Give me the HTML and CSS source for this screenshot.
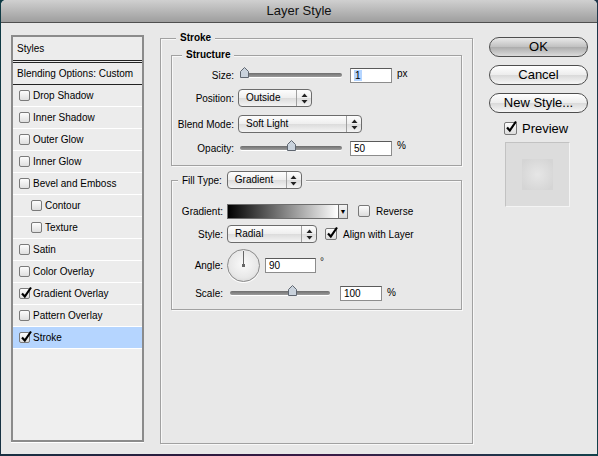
FILE: index.html
```html
<!DOCTYPE html>
<html lang="en">
<head>
  <meta charset="UTF-8" />
  <title>Layer Style</title>
  <link rel="stylesheet" href="styles.css">
</head>
<body>

  <div class="window">
    <div class="titlebar">Layer Style</div>

    <div class="content">

      <!-- effects list -->
      <div class="style-list">
        <div class="list-head">Styles</div>
        <div class="list-blend">Blending Options: Custom</div>
        <ul class="effects">
          <li><span class="check"></span>Drop Shadow</li>
          <li><span class="check"></span>Inner Shadow</li>
          <li><span class="check"></span>Outer Glow</li>
          <li><span class="check"></span>Inner Glow</li>
          <li><span class="check"></span>Bevel and Emboss</li>
          <li class="sub"><span class="check"></span>Contour</li>
          <li class="sub"><span class="check"></span>Texture</li>
          <li><span class="check"></span>Satin</li>
          <li><span class="check"></span>Color Overlay</li>
          <li><span class="check on"><svg viewBox="0 0 12 12"><path d="M2 6.5 L4.8 9.5 L11 0.5"/></svg></span>Gradient Overlay</li>
          <li><span class="check"></span>Pattern Overlay</li>
          <li class="selected"><span class="check on"><svg viewBox="0 0 12 12"><path d="M2 6.5 L4.8 9.5 L11 0.5"/></svg></span>Stroke</li>
        </ul>
      </div>

      <!-- stroke settings -->
      <fieldset class="group stroke-group">
        <legend class="title">Stroke</legend>

        <fieldset class="group structure">
          <legend class="title">Structure</legend>

          <div class="row r-size">
            <span class="label">Size:</span>
            <div class="slider"><span class="thumb" style="--pos: 0"><svg viewBox="0 0 9 11"><polygon points="0.5,4.5 4.5,0.5 8.5,4.5 8.5,10.5 0.5,10.5"/></svg></span></div>
            <span class="field"><span class="selected-text">1</span></span>
            <span class="unit">px</span>
          </div>

          <div class="row r-position">
            <span class="label">Position:</span>
            <div class="popup w-position"><span class="popup-text">Outside</span><span class="popup-arrows"><svg viewBox="0 0 7 11"><polygon points="3.5,0.5 6.5,4 0.5,4"/><polygon points="0.5,7 6.5,7 3.5,10.5"/></svg></span></div>
          </div>

          <div class="row r-blend">
            <span class="label">Blend Mode:</span>
            <div class="popup w-blend"><span class="popup-text">Soft Light</span><span class="popup-arrows"><svg viewBox="0 0 7 11"><polygon points="3.5,0.5 6.5,4 0.5,4"/><polygon points="0.5,7 6.5,7 3.5,10.5"/></svg></span></div>
          </div>

          <div class="row r-opacity">
            <span class="label">Opacity:</span>
            <div class="slider"><span class="thumb" style="--pos: 0.5"><svg viewBox="0 0 9 11"><polygon points="0.5,4.5 4.5,0.5 8.5,4.5 8.5,10.5 0.5,10.5"/></svg></span></div>
            <span class="field">50</span>
            <span class="unit">%</span>
          </div>
        </fieldset>

        <fieldset class="group fill">
          <legend class="fill-title">
            <span>Fill Type:</span>
            <div class="popup w-filltype"><span class="popup-text">Gradient</span><span class="popup-arrows"><svg viewBox="0 0 7 11"><polygon points="3.5,0.5 6.5,4 0.5,4"/><polygon points="0.5,7 6.5,7 3.5,10.5"/></svg></span></div>
          </legend>

          <div class="row r-gradient">
            <span class="label">Gradient:</span>
            <div class="swatch"><span class="swatch-ramp"></span><span class="swatch-arrow">&#9660;</span></div>
            <span class="box"></span>
            <span class="box-label">Reverse</span>
          </div>

          <div class="row r-style">
            <span class="label">Style:</span>
            <div class="popup w-style"><span class="popup-text">Radial</span><span class="popup-arrows"><svg viewBox="0 0 7 11"><polygon points="3.5,0.5 6.5,4 0.5,4"/><polygon points="0.5,7 6.5,7 3.5,10.5"/></svg></span></div>
            <span class="box checked"><svg viewBox="0 0 12 12"><path d="M2 6.5 L4.8 9.5 L11 0.5"/></svg></span>
            <span class="box-label">Align with Layer</span>
          </div>

          <div class="row r-angle">
            <span class="label">Angle:</span>
            <div class="dial"><span class="dial-hand"></span><span class="dial-dot"></span></div>
            <span class="field angle-field">90</span>
            <span class="degree">&deg;</span>
          </div>

          <div class="row r-scale">
            <span class="label">Scale:</span>
            <div class="slider scale-slider"><span class="thumb" style="--pos: 0.64"><svg viewBox="0 0 9 11"><polygon points="0.5,4.5 4.5,0.5 8.5,4.5 8.5,10.5 0.5,10.5"/></svg></span></div>
            <span class="field">100</span>
            <span class="unit">%</span>
          </div>
        </fieldset>
      </fieldset>

      <!-- dialog buttons -->
      <div class="actions">
        <button class="btn default">OK</button>
        <button class="btn">Cancel</button>
        <button class="btn">New Style...</button>
        <div class="preview-toggle">
          <span class="box checked big"><svg viewBox="0 0 12 12"><path d="M2 6.5 L4.8 9.5 L11 0.5"/></svg></span>
          <span>Preview</span>
        </div>
        <div class="preview"><span class="preview-swatch"></span></div>
      </div>

    </div>
  </div>

</body>
</html>
```

FILE: styles.css
```css
* {
  box-sizing: border-box;
}

body {
  margin: 0;
  height: 456px;
  overflow: hidden;
  background: linear-gradient(100deg, #0f3b45, #2c1a3e 40%, #3a1b47 60%, #12414b);
  font-family: "Liberation Sans", Arial, sans-serif;
  font-size: 10px;
  color: #000;
}

.window {
  width: 596px;
  height: 454px;
  margin-left: 1px;
  background-color: #e8e8e8;
  border-radius: 5px 5px 0 0;
  overflow: hidden;
}

.titlebar {
  height: 23px;
  border-bottom: 1px solid #4f4f4f;
  background: linear-gradient(#d0d0d0, #9e9e9e);
  text-align: center;
  font-size: 13px;
  line-height: 22px;
  color: #111;
}

.content {
  display: flex;
  align-items: flex-start;
  padding: 9px 0 0 10px;
}

/* left list of effects */
.style-list {
  width: 133px;
  height: 407px;
  margin-top: 3px;
  border: 2px solid #8b8b8b;
  background-color: #efefef;
  box-shadow: 0 1px 0 #fff;
}
.list-head {
  height: 26px;
  padding-left: 4px;
  line-height: 23px;
  border-bottom: 3px double #222;
  background-color: #ececec;
}
.list-blend {
  height: 22px;
  padding-left: 4px;
  line-height: 21px;
  border-bottom: 1px solid #222;
  background-color: #ececec;
}
.effects {
  list-style: none;
  margin: 0;
  padding: 0;
}
.effects li {
  display: flex;
  align-items: center;
  height: 22px;
  padding-left: 6px;
  border-bottom: 1px solid #fff;
  background-color: #ececec;
}
.effects li.sub {
  padding-left: 18px;
}
.effects li.selected {
  background-color: #b5d5ff;
}

.check {
  position: relative;
  width: 11px;
  height: 11px;
  margin-right: 3px;
  border: 1px solid #7a7a7a;
  border-radius: 2px;
  background: linear-gradient(#fdfdfd, #dedede);
}
.check svg,
.box svg {
  position: absolute;
  left: 0;
  top: -2px;
  width: 12px;
  height: 12px;
  overflow: visible;
}
.check svg path,
.box svg path {
  fill: none;
  stroke: #000;
  stroke-width: 2.2;
}

/* group boxes */
.group {
  margin: 0;
  min-width: 0;
  border: 1px solid #a1a1a1;
  box-shadow: 1px 1px 0 #f8f8f8, inset 1px 1px 0 #f8f8f8;
}
.group legend {
  background-color: #e8e8e8;
}
.title {
  padding: 0 4px;
  font-weight: bold;
  font-size: 10px;
  line-height: 12px;
}

.stroke-group {
  width: 313px;
  height: 412px;
  margin-left: 16px;
  padding: 5px 10px 0;
}
.stroke-group > .title {
  margin-left: 5px;
}

.structure {
  padding: 4px 0 6px;
}
.structure > .title {
  margin-left: 10px;
}

.fill {
  margin-top: 5px;
  padding: 12px 0 7px;
}
.fill-title {
  display: flex;
  align-items: center;
  gap: 5px;
  margin-left: 6px;
  padding: 0 4px;
}

.row {
  display: flex;
  align-items: center;
  height: 24px;
}
.r-size {
  height: 20px;
}
.r-position,
.r-blend {
  height: 26px;
}
.r-opacity {
  height: 22px;
}
.label {
  width: 62px;
  margin-right: 4px;
  text-align: right;
}
.fill .label {
  width: 51px;
}
.r-gradient,
.r-style {
  height: 20px;
}
.r-gradient {
  margin-bottom: 3px;
}
.r-style {
  margin-bottom: 4px;
}
.r-angle {
  height: 34px;
  margin-bottom: 2px;
}
.r-scale {
  height: 18px;
}

/* sliders */
.slider {
  position: relative;
  width: 102px;
  height: 4px;
  margin-left: 2px;
  margin-right: 8px;
  border-radius: 2px;
  background: linear-gradient(#6e6e6e, #9c9c9c);
  box-shadow: 0 1px 0 #fff;
}
.scale-slider {
  width: 100px;
  margin-left: 3px;
  margin-right: 10px;
}
.thumb {
  position: absolute;
  top: -6px;
  left: calc(var(--pos) * (100% - 9px));
  width: 9px;
  height: 11px;
}
.thumb svg {
  display: block;
  width: 9px;
  height: 11px;
}
.thumb polygon {
  fill: #c9d2dc;
  stroke: #5f6670;
  stroke-width: 1;
}

/* text fields */
.field {
  width: 42px;
  height: 15px;
  padding-left: 3px;
  line-height: 13px;
  border: 1px solid #8c8c8c;
  border-top-color: #5a5a5a;
  background-color: #fff;
}
.selected-text {
  padding: 0 1px;
  background-color: #b5d5ff;
}
.unit {
  margin-left: 5px;
  align-self: flex-start;
  margin-top: 3px;
}

/* popup menus */
.popup {
  display: flex;
  height: 18px;
  border: 1px solid #6c6c6c;
  border-radius: 4px;
  background: linear-gradient(#fdfdfd, #eeeeee 50%, #dcdcdc 52%, #f4f4f4);
  font-size: 10px;
  font-weight: normal;
}
.popup-text {
  flex: 1;
  padding-left: 7px;
  line-height: 16px;
}
.popup-arrows {
  display: flex;
  align-items: center;
  justify-content: center;
  width: 15px;
  border-left: 1px solid #a0a0a0;
}
.popup-arrows svg {
  width: 7px;
  height: 11px;
}
.popup-arrows polygon {
  fill: #222;
}
.w-position {
  width: 74px;
}
.w-blend {
  width: 124px;
}
.w-filltype {
  width: 75px;
}
.w-style {
  width: 90px;
}

/* gradient swatch */
.swatch {
  display: flex;
  height: 15px;
  border: 1px solid #6e6e6e;
}
.swatch-ramp {
  width: 110px;
  background: linear-gradient(90deg, #000, #fff);
}
.swatch-arrow {
  width: 9px;
  border-left: 1px solid #6e6e6e;
  background: linear-gradient(#f4f4f4, #d8d8d8);
  font-size: 7px;
  line-height: 13px;
  text-align: center;
}

/* checkboxes */
.box {
  position: relative;
  width: 12px;
  height: 12px;
  margin-left: 10px;
  border: 1px solid #787878;
  border-radius: 2px;
  background: linear-gradient(#fdfdfd, #dcdcdc);
}
.r-style .box {
  margin-left: 8px;
}
.box-label {
  margin-left: 6px;
}

/* angle dial */
.dial {
  position: relative;
  width: 33px;
  height: 33px;
  border: 1px solid #8a8a8a;
  border-radius: 50%;
  background: radial-gradient(circle at 50% 45%, #fafafa, #e8e8e8 60%, #c9c9c9);
  box-shadow: 0 1px 0 #fff;
}
.dial-hand {
  position: absolute;
  left: 15px;
  top: 1px;
  width: 1px;
  height: 15px;
  background-color: #666;
}
.dial-dot {
  position: absolute;
  left: 14px;
  top: 14px;
  width: 3px;
  height: 3px;
  background-color: #666;
}
.angle-field {
  width: 51px;
  margin-left: 5px;
}
.degree {
  align-self: flex-start;
  margin-top: 8px;
  margin-left: 4px;
  font-size: 10px;
  color: #222;
}

/* right column */
.actions {
  display: flex;
  flex-direction: column;
  width: 99px;
  margin-top: 5px;
  margin-left: 16px;
}
.btn {
  height: 20px;
  margin: 0 0 8px;
  padding: 0;
  border: 1px solid #4e4e4e;
  border-radius: 10px;
  background: linear-gradient(#ffffff, #ededed 48%, #dadada 52%, #f6f6f6);
  font-family: "Liberation Sans", Arial, sans-serif;
  font-size: 13px;
  line-height: 18px;
  color: #000;
}
.btn.default {
  background: linear-gradient(#e9e9e9, #c2c2c2 48%, #adadad 52%, #dadada);
}
.preview-toggle {
  display: flex;
  align-items: center;
  height: 13px;
  margin-top: 1px;
  padding-left: 15px;
  font-size: 13px;
}
.box.big {
  width: 13px;
  height: 13px;
  margin-left: 0;
  margin-right: 5px;
}
.preview {
  display: flex;
  align-items: center;
  justify-content: center;
  width: 65px;
  height: 65px;
  margin-top: 7px;
  margin-left: 16px;
  border: 1px solid #c2c2c2;
  border-right-color: #f4f4f4;
  border-bottom-color: #f4f4f4;
  background-color: #dcdcdc;
}
.preview-swatch {
  width: 31px;
  height: 31px;
  background: radial-gradient(circle, #e6e6e6, #d5d5d5 85%);
}
```
